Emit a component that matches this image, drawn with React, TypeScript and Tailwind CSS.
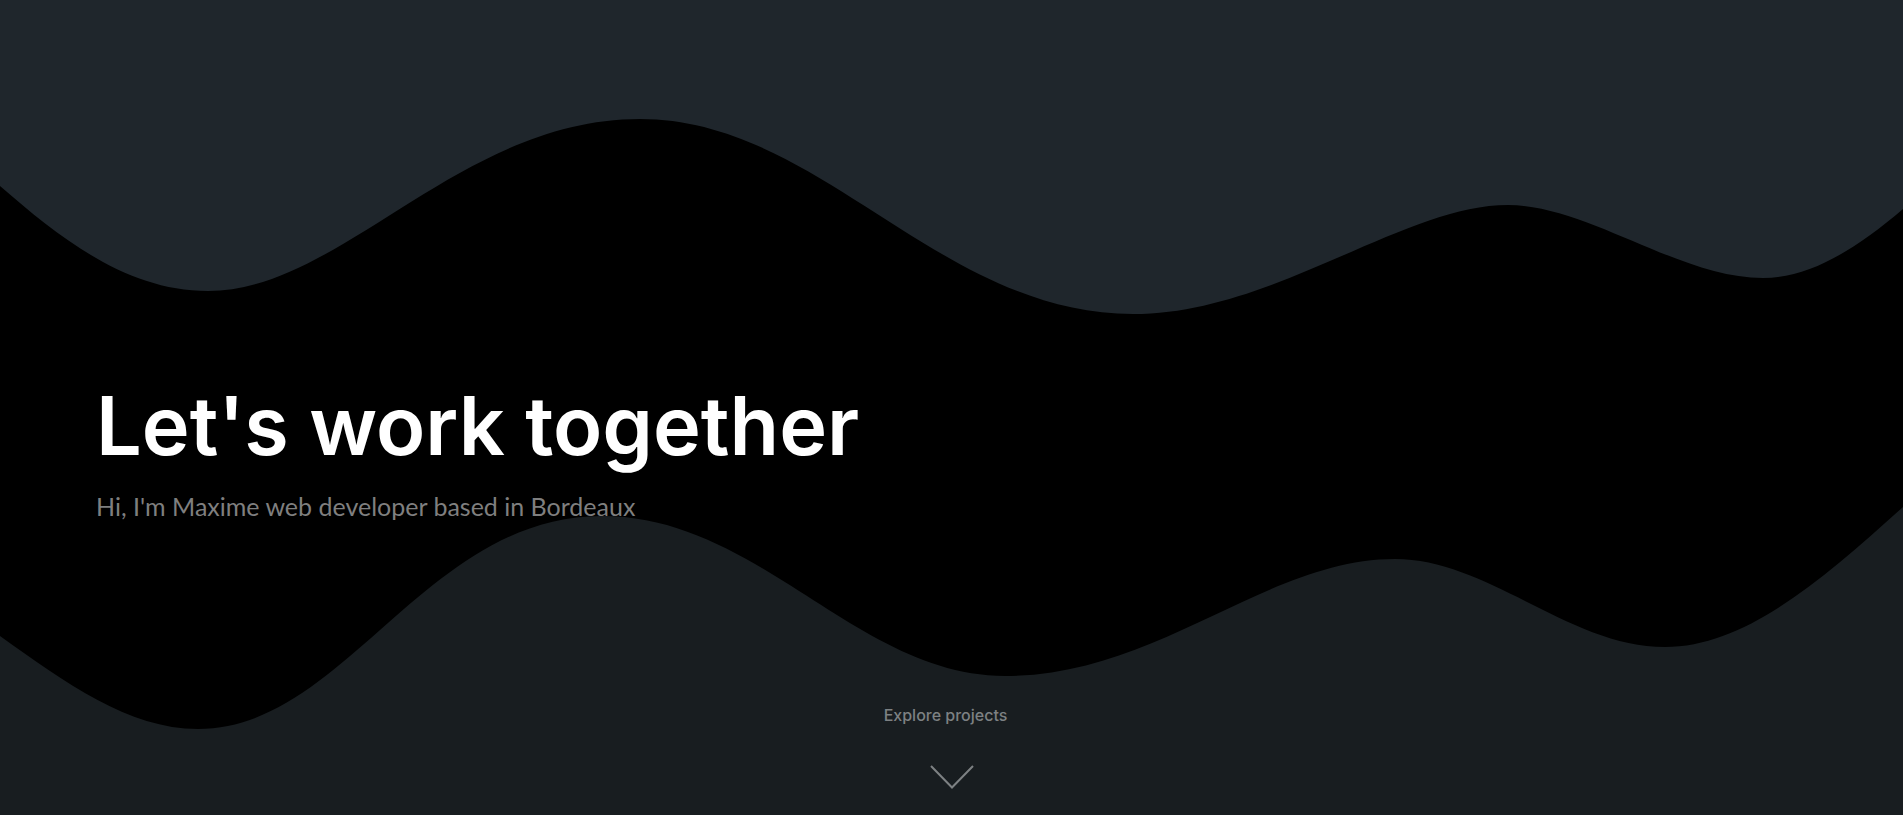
function Waves() {
  return (
    <svg
      className="absolute inset-0 h-full w-full"
      viewBox="0 0 1903 815"
      preserveAspectRatio="none"
      aria-hidden="true"
    >
      <path
        fill="#1f262c"
        d="M0 0V186C62 240 128 291 208 291C341 291 459 119 640 119C821 119 938 314 1133 314C1273 314 1403 205 1508 205C1588 205 1679 278 1763 278C1810 278 1856 249 1903 209V0Z"
      />
      <path
        fill="#181d20"
        d="M0 815V636C65 682 128 729 198 729C345 729 425 516 602 516C759 516 857 676 1005 676C1158 676 1266 559 1395 559C1488 559 1570 647 1665 647C1745 647 1822 580 1903 507V815Z"
      />
    </svg>
  );
}

function Chevron() {
  return (
    <svg width="44" height="24" viewBox="0 0 44 24" fill="none" stroke="currentColor" strokeWidth="2" aria-hidden="true">
      <path d="M1 1L22 22.5L43 1" />
    </svg>
  );
}

export default function App() {
  return (
    <main className="relative grid min-h-screen grid-rows-[1fr_auto_1fr] bg-black font-['Inter',sans-serif]">
      <Waves />
      <header className="relative row-start-2 flex flex-col gap-4 px-24 pt-[84px]">
        <h1 className="text-[81px] leading-[96px] font-semibold text-white">Let's work together</h1>
        <p className="font-['Lato',sans-serif] text-[25px] leading-8 text-[#7f7f7f]">
          Hi, I'm Maxime web developer based in Bordeaux
        </p>
      </header>
      <a
        href="#projects"
        className="relative row-start-3 flex flex-col items-center gap-[38px] self-end justify-self-center pb-[26px] text-[#7d8183]"
      >
        <span className="pr-3 text-base leading-6 font-medium">Explore projects</span>
        <Chevron />
      </a>
    </main>
  );
}
